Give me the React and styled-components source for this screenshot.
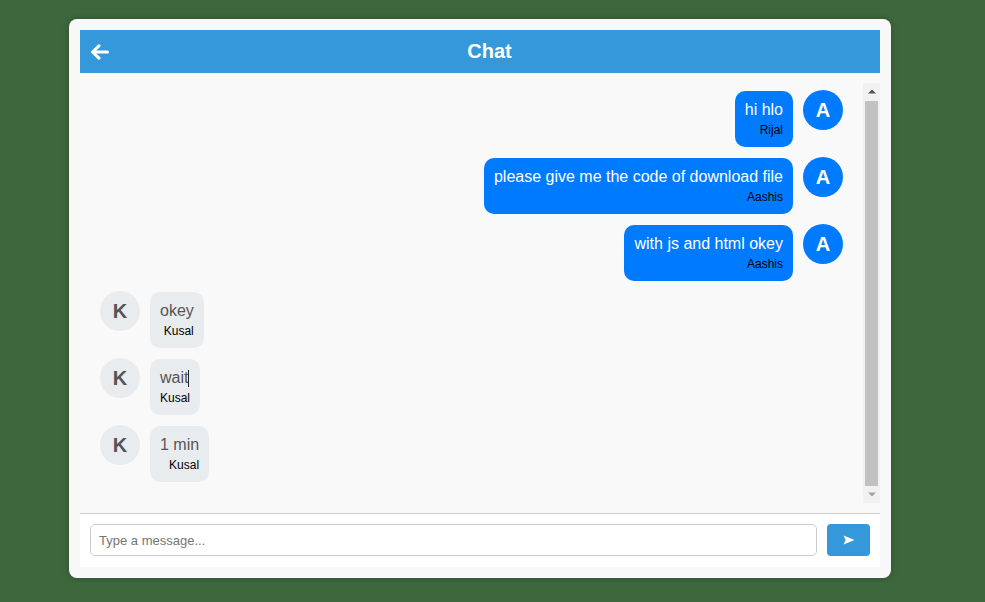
import React from 'react';
import styled, { createGlobalStyle } from 'styled-components';

const GlobalStyle = createGlobalStyle`
	html, body {
		margin: 0;
		padding: 0;
		background: #3d673d;
		font-family: 'Liberation Sans', Arial, sans-serif;
	}
`;

const messages = [
	{ id: 1, text: 'hi hlo', name: 'Rijal', avatar: 'A', mine: true },
	{ id: 2, text: 'please give me the code of download file', name: 'Aashis', avatar: 'A', mine: true },
	{ id: 3, text: 'with js and html okey', name: 'Aashis', avatar: 'A', mine: true },
	{ id: 4, text: 'okey', name: 'Kusal', avatar: 'K', mine: false },
	{ id: 5, text: 'wait', name: 'Kusal', avatar: 'K', mine: false, caret: true },
	{ id: 6, text: '1 min', name: 'Kusal', avatar: 'K', mine: false },
];

export default function App() {
	return (
		<>
			<GlobalStyle />
			<Page>
				<Container>
					<Header>
						<BackButton aria-label="back">
							<svg width="19" height="16" viewBox="0 0 19 16">
								<path d="M17.5 8H3M9 1.8L2.6 8 9 14.2" fill="none" stroke="#fff" strokeWidth="3" strokeLinecap="round" strokeLinejoin="round" />
							</svg>
						</BackButton>
						<Title>Chat</Title>
					</Header>
					<ChatArea>
						<MessageList>
							{messages.map((m) => (
								<Row key={m.id} $mine={m.mine}>
									<Avatar $mine={m.mine}>{m.avatar}</Avatar>
									<Bubble $mine={m.mine}>
										<Text $mine={m.mine}>
											{m.text}
											{m.caret && <Caret />}
										</Text>
										<Name>{m.name}</Name>
									</Bubble>
								</Row>
							))}
						</MessageList>
						<ScrollBar>
							<ScrollButton>
								<svg width="8" height="5" viewBox="0 0 8 5">
									<path d="M0 4.5L4 0.5L8 4.5Z" fill="#505050" />
								</svg>
							</ScrollButton>
							<ScrollTrack>
								<ScrollThumb />
							</ScrollTrack>
							<ScrollButton>
								<svg width="8" height="5" viewBox="0 0 8 5">
									<path d="M0 0.5L4 4.5L8 0.5Z" fill="#a3a3a3" />
								</svg>
							</ScrollButton>
						</ScrollBar>
					</ChatArea>
					<Footer>
						<Input placeholder="Type a message..." />
						<SendButton aria-label="send">
							<svg width="12" height="10" viewBox="0 0 12 10">
								<path d="M0.5 0.5L11.5 5L0.5 9.5L2.6 5Z" fill="#fff" />
							</svg>
						</SendButton>
					</Footer>
				</Container>
			</Page>
		</>
	);
}

const Page = styled.div`
	padding: 19px 0 0 69px;
	height: 583px;
	box-sizing: border-box;
`;

const Container = styled.div`
	width: 822px;
	height: 559px;
	box-sizing: border-box;
	padding: 11px;
	background: #f8f8f8;
	border-radius: 8px;
	box-shadow: 0 0 6px rgba(0, 0, 0, 0.25);
	display: flex;
	flex-direction: column;
`;

const Header = styled.div`
	height: 43px;
	padding: 0 10px;
	background: #3498db;
	display: flex;
	align-items: center;
	flex-shrink: 0;
`;

const BackButton = styled.button`
	padding: 0;
	border: none;
	background: none;
	display: flex;
	cursor: pointer;
`;

const Title = styled.h1`
	flex: 1;
	margin: 0;
	text-align: center;
	color: #fff;
	font-size: 20px;
	font-weight: bold;
`;

const ChatArea = styled.div`
	flex: 1;
	min-height: 0;
	padding: 10px 0;
	background: #f9f9f9;
	display: flex;
`;

const MessageList = styled.div`
	flex: 1;
	overflow: hidden;
	padding: 7px 20px 0;
`;

const ScrollBar = styled.div`
	width: 17px;
	flex-shrink: 0;
	background: #f1f1f1;
	display: flex;
	flex-direction: column;
`;

const ScrollButton = styled.div`
	height: 17px;
	flex-shrink: 0;
	display: flex;
	align-items: center;
	justify-content: center;
`;

const ScrollTrack = styled.div`
	flex: 1;
	display: flex;
	padding: 1px 2px 0;
`;

const ScrollThumb = styled.div`
	flex: 1;
	background: #c1c1c1;
`;

const Row = styled.div`
	display: flex;
	flex-direction: ${(p) => (p.$mine ? 'row-reverse' : 'row')};
	align-items: flex-start;
	gap: 10px;
	margin-bottom: 10px;
	&:last-child {
		margin-bottom: 0;
	}
`;

const Avatar = styled.div`
	width: 40px;
	height: 40px;
	border-radius: 50%;
	flex-shrink: 0;
	display: flex;
	align-items: center;
	justify-content: center;
	font-size: 20px;
	font-weight: bold;
	background: ${(p) => (p.$mine ? '#007bff' : '#e9ecef')};
	color: ${(p) => (p.$mine ? '#fff' : '#555')};
`;

const Bubble = styled.div`
	margin-top: 1px;
	padding: 10px;
	border-radius: 10px;
	background: ${(p) => (p.$mine ? '#007bff' : '#e9ecef')};
	display: flex;
	flex-direction: column;
	align-items: ${(p) => (p.$mine ? 'flex-end' : 'flex-start')};
`;

const Text = styled.div`
	font-size: 16px;
	line-height: 18px;
	color: ${(p) => (p.$mine ? '#fff' : '#555')};
	display: flex;
	align-items: center;
`;

const Caret = styled.span`
	width: 1px;
	height: 17px;
	background: #222;
`;

const Name = styled.div`
	align-self: flex-end;
	margin-top: 4px;
	font-size: 12px;
	line-height: 14px;
	color: #000;
`;

const Footer = styled.div`
	flex-shrink: 0;
	display: flex;
	align-items: flex-start;
	gap: 10px;
	padding: 10px 10px 11px;
	background: #fff;
	border-top: 1px solid #ccc;
`;

const Input = styled.input`
	flex: 1;
	height: 32px;
	box-sizing: border-box;
	padding: 0 8px;
	border: 1px solid #ccc;
	border-radius: 5px;
	font-family: 'Liberation Sans', Arial, sans-serif;
	font-size: 13px;
	outline: none;
	&::placeholder {
		color: #757575;
	}
`;

const SendButton = styled.button`
	width: 43px;
	height: 32px;
	border: none;
	border-radius: 4px;
	background: #3498db;
	display: flex;
	align-items: center;
	justify-content: center;
	cursor: pointer;
	padding: 0;
`;
